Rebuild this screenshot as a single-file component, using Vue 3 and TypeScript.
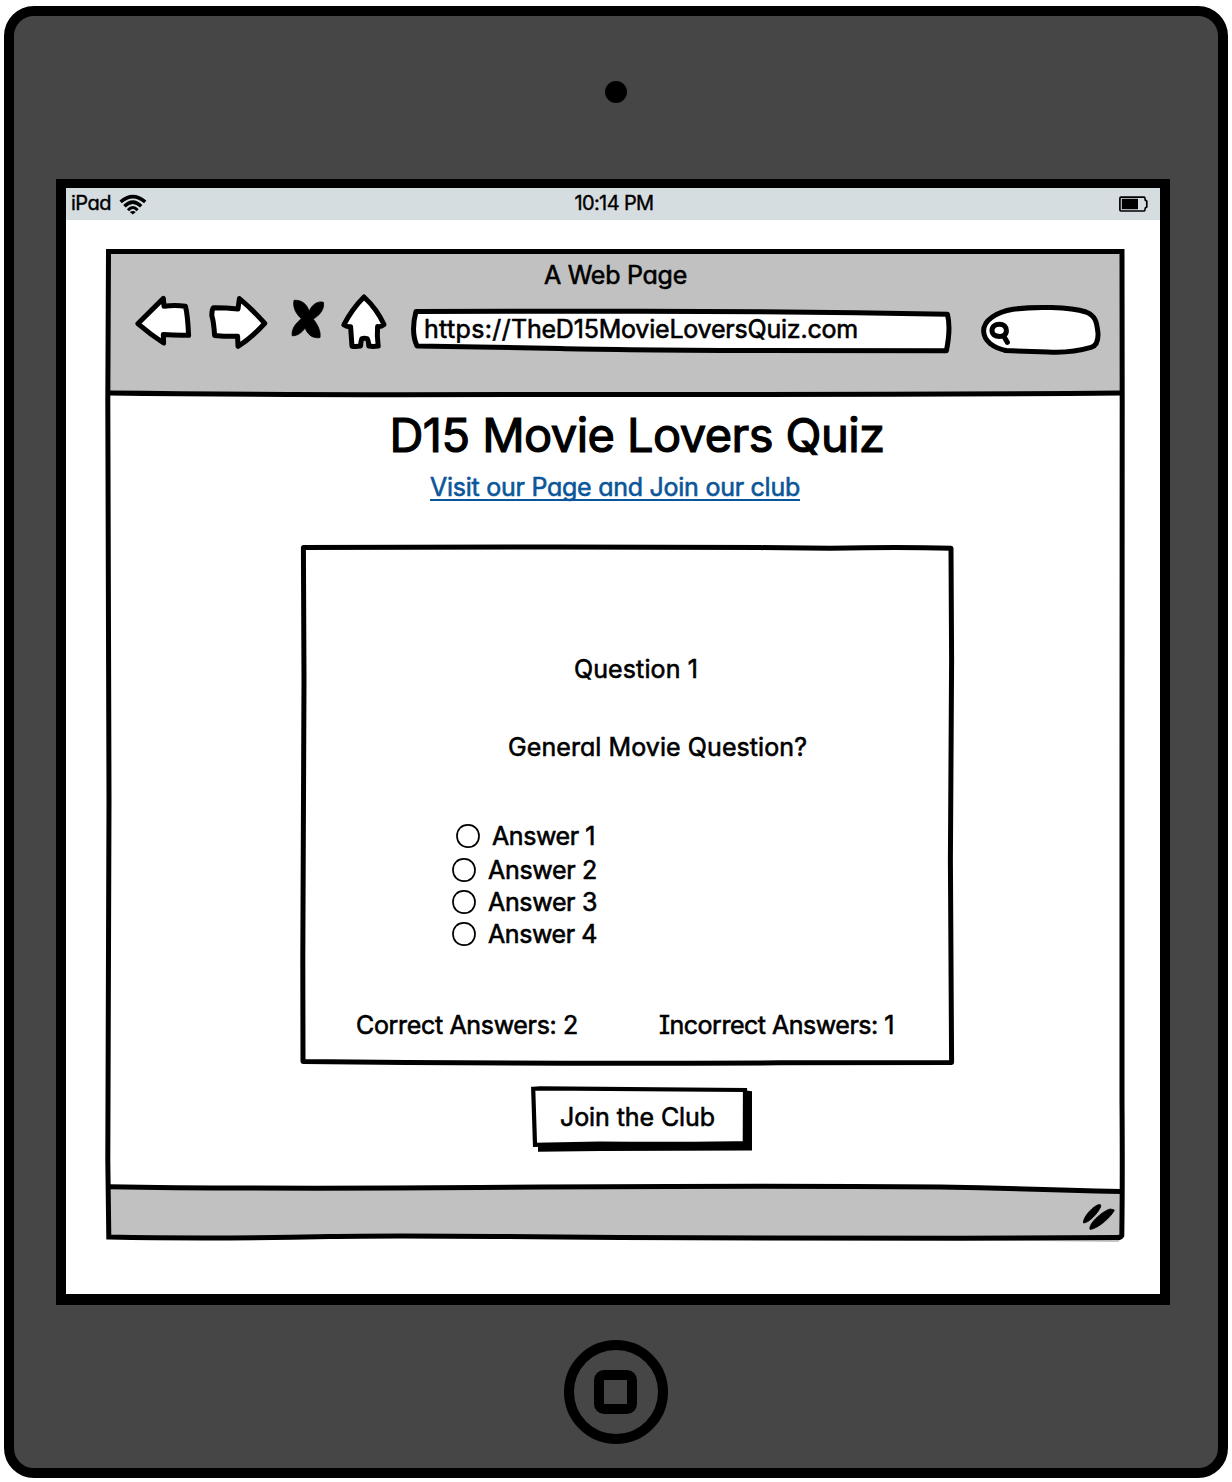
<script setup lang="ts">
import { ref } from 'vue'

interface Answer {
  label: string
  width: number
}

const answers: Answer[] = [
  { label: 'Answer 1', width: 103 },
  { label: 'Answer 2', width: 109 },
  { label: 'Answer 3', width: 109 },
  { label: 'Answer 4', width: 109 },
]
const picked = ref<string>('')

// Spaces a label's letters so that it takes up the given width in pixels.
const vFit = {
  mounted(el: HTMLElement, binding: { value: number }) {
    const count = (el.textContent ?? '').length
    const natural = el.getBoundingClientRect().width
    el.style.letterSpacing = `${(binding.value - natural) / count}px`
  },
}
</script>

<template>
  <div class="device">
    <div class="camera"></div>

    <main class="screen">
      <div class="status">
        <div class="carrier">
          <span v-fit="40">iPad</span>
          <svg class="wifi" width="28" height="22" viewBox="119 192 28 22">
            <g fill="none" stroke="#000" stroke-width="3.5">
              <path d="M120.6 200.8Q132.8 190.4 145.2 200.8" />
              <path d="M124.4 205.2Q132.8 197 141.2 205.2" />
              <path d="M128 209.2Q132.8 203.6 137.6 209.2" stroke-width="3" />
            </g>
            <path d="M129.8 211Q132.8 209 135.8 211L132.8 213.6Z" />
          </svg>
        </div>
        <span v-fit="79" class="clock">10:14 PM</span>
        <svg class="battery" width="31" height="18" viewBox="1118 195 31 18">
          <path
            d="M1121 197.1H1144.2Q1145 197.2 1145.2 200L1146.8 201.2V206.8L1145.2 208.2Q1145 210.8 1144.2 211H1121Q1119.9 211 1119.9 209.8V198.4Q1119.9 197.1 1121 197.1Z"
            fill="none"
            stroke="#000"
            stroke-width="1.7"
          />
          <rect x="1121.8" y="198.8" width="16.2" height="10.4" />
        </svg>
      </div>

      <section class="window">
        <svg class="frame" viewBox="104 247 1023 997" width="1023" height="997">
          <path d="M108 251H1122V393L600 395L108 393Z" fill="#c1c1c1" />
          <path d="M108 1187L300 1188L900 1187L1122 1192L1122 1238L1118 1242L960 1240L108 1237Z" fill="#c1c1c1" />
          <g fill="none" stroke="#000" stroke-width="5">
            <path d="M108.5 251.5H1122L1122.2 400L1122 800L1122 1100Q1122.6 1180 1121.8 1235.5Q1121 1237.6 1117 1237.6L960 1238.3L620 1237.6Q400 1235 330 1236.5Q210 1239 108.8 1237L107.8 1160L109 800L107.8 400Z" />
            <path d="M109 393Q240 394.5 400 394.7L600 394.5Q860 395 1121 393" />
            <path d="M109 1186.7Q240 1189 480 1187.6Q740 1185.4 940 1187Q1040 1189 1121 1191.6" />
          </g>
        </svg>

        <header class="chrome">
          <div v-fit="143" class="page-title">A Web Page</div>
          <div class="toolbar">
            <svg width="60" height="60" viewBox="134 294 60 60" class="tool">
              <path d="M137.8 323.7L163.4 298.4L164 306.2Q175 305 185.4 306.2Q187.6 314 188.6 335.3Q176 335.6 163.3 334.6L163.6 343Q151 335 137.8 323.7Z" />
            </svg>
            <svg width="62" height="60" viewBox="208 294 62 60" class="tool forward">
              <path d="M213.4 307.7Q225 307.6 238 309L239.4 298.6Q252 309 264.8 323.3Q251 338.5 238 346.3L237.6 336.3Q226 336.6 214.6 335.4Q213.8 322 211.9 316Q211.6 310 213.4 307.7Z" />
            </svg>
            <svg width="36" height="60" viewBox="290 294 36 60" class="cross">
              <path d="M294 300.3C301.6 299.6 307.5 304.6 309 311.4C312 304.6 317.6 300.6 323.4 302.3C324.8 309 319.6 315.6 313.2 319C317.8 324.6 321 331.6 320 337.6C311.4 338.9 306.8 333 305.2 328C301.8 332.4 298 335.8 292.2 335.8C291.2 328.6 296.4 322.6 301.4 318.8C295.6 313.6 292.6 307 294 300.3Z" stroke="#000" stroke-width="0.8" />
            </svg>
            <svg width="50" height="60" viewBox="340 292 50 60" class="tool house">
              <path d="M364 297Q377 309 384 324.6Q381 327 377.6 326.6Q376.8 336 378.2 346Q373 346.8 368.8 346Q368.4 340 367 338.6Q364 337.8 361.8 338.8Q360.8 341 360.6 346Q356 346.8 352 346.2L350.6 326.7Q347 327.4 343.8 324.9Q352 309 364 297Z" />
            </svg>
            <div class="address">
              <svg class="backing tool" width="544" height="52" viewBox="410 306 544 52">
                <path d="M416 311.4L640 311.2Q800 311.5 947.4 314.2Q951 328 946.4 350.8L760 350.6Q600 349.6 560 348.4L417 346Q410.6 332 416 311.4Z" />
              </svg>
              <span v-fit="87">https://</span><span v-fit="347">TheD15MovieLoversQuiz.com</span>
            </div>
            <svg width="122" height="54" viewBox="980 304 122 54" class="tool search">
              <path d="M1007 350.6C993 348 984 341 983.6 331C983.6 320 997 312 1013 309.3C1034 306.2 1070 306.8 1086 312C1097 316 1096.8 325 1098 333C1098.4 342 1096 346 1091 347.4C1080 350.6 1066 353 1048 352L1005 350.6" />
              <path d="M1003.6 336L1007.4 342.4" />
              <path d="M999.4 324.2C1003.6 324.2 1006.4 326.6 1006.4 330.8C1006.4 334.6 1003.6 336.4 999.6 336.4C995 336.4 992 334.4 992 330.6C992 326.6 995 324.2 999.4 324.2Z" />
            </svg>
          </div>
        </header>

        <article class="page">
          <h1><span v-fit="495">D15 Movie Lovers Quiz</span></h1>
          <a class="club-link"><span v-fit="370">Visit our Page and Join our club</span></a>

          <section class="quiz">
            <svg class="backing tool" width="658" height="526" viewBox="298 542 658 526">
              <path d="M303.4 547.6Q420 547 560 547L760 547.6L830 548.2Q900 546.8 951 548.2L951.6 660L950.4 860L951.6 1062.6L780 1062.8Q540 1064.2 303 1061.4L302.8 960Q303.4 760 304 680Z" />
            </svg>
            <div v-fit="124" class="number">Question 1</div>
            <div v-fit="299" class="question">General Movie Question?</div>
            <div class="answers">
              <label v-for="answer in answers" :key="answer.label" class="answer" @click="picked = answer.label">
                <svg width="24" height="24" viewBox="0 0 24 24">
                  <path
                    d="M12 .9C18.5 .9 23 5.6 23 12C23 18.6 18.4 23.1 12 23.1C5.4 23.1 1 18.4 1 12C1 5.4 5.4 .9 12 .9Z"
                    fill="#fff"
                    stroke="#000"
                    stroke-width="1.7"
                  />
                  <circle v-if="picked === answer.label" cx="12" cy="12" r="6" />
                </svg>
                <span v-fit="answer.width">{{ answer.label }}</span>
              </label>
            </div>
            <div class="score">
              <span v-fit="222">Correct Answers: 2</span>
              <span v-fit="235">Incorrect Answers: 1</span>
            </div>
          </section>

          <button type="button" class="join">
            <svg class="backing" width="224" height="70" viewBox="530 1084 224 70">
              <path d="M538 1142V1151.8L600 1151L752 1150.6V1091.2L746 1090.6Z" />
              <path d="M533.2 1088.8L540 1088.4L745 1090L744.8 1143Q690 1144.2 600 1143.6L535 1144.8Z" fill="#fff" stroke="#000" stroke-width="4.2" />
            </svg>
            <span v-fit="155">Join the Club</span>
          </button>
        </article>

        <footer class="footer">
          <svg width="36" height="30" viewBox="1081 1202 36 30">
            <g stroke="#000" stroke-width="0.8">
              <path d="M1083.4 1223C1082.6 1217 1094 1205 1099.4 1204.4Q1101.6 1204.6 1100.6 1207C1098 1213 1089 1223 1083.4 1223Z" />
              <path d="M1090 1229.4C1088 1223 1105 1209.4 1110.6 1209L1114.4 1210C1112 1216 1098 1229 1090 1229.4Z" />
            </g>
          </svg>
        </footer>
      </section>
    </main>

    <div class="home-button"><div class="home-square"></div></div>
  </div>
</template>

<style>
body {
  margin: 0;
  background: #fff;
}
</style>

<style scoped>
.device {
  box-sizing: border-box;
  width: 1224px;
  height: 1472px;
  margin: 6px 4px 4px;
  border: 10px solid #000;
  border-radius: 30px;
  background: #464646;
  display: flex;
  flex-direction: column;
  align-items: center;
  overflow: hidden;
  font-family: Inter, 'Noto Sans', sans-serif;
  font-size: 25px;
  line-height: 32px;
  font-feature-settings: 'cv11', 'cv08', 'calt' 0;
  -webkit-text-stroke: 0.6px currentColor;
  color: #000;
  white-space: nowrap;
}
svg {
  display: block;
  flex: none;
}
.camera {
  flex: none;
  width: 22px;
  height: 22px;
  margin-top: 65px;
  border-radius: 50%;
  background: #000;
}
.screen {
  flex: none;
  box-sizing: border-box;
  width: 1114px;
  height: 1126px;
  margin: 76px 6px 0 0;
  border: solid #000;
  border-width: 9px 10px 11px;
  background: #fff;
  display: flex;
  flex-direction: column;
}
.status {
  height: 32px;
  background: #d6dde0;
  display: grid;
  grid-template-columns: 1fr auto 1fr;
  align-items: center;
  font-size: 20px;
  padding: 0 11px 0 5px;
  line-height: 30px;
  -webkit-text-stroke-width: 0.4px;
}
.status span {
  margin-top: -2px;
}
.carrier {
  display: flex;
  align-items: center;
  gap: 8px;
}
.clock {
  margin-left: 8px;
}
.battery {
  justify-self: end;
}
.window {
  position: relative;
  width: 1019px;
  height: 992px;
  margin: 29px 0 0 40px;
  display: flex;
  flex-direction: column;
}
.frame {
  position: absolute;
  left: -2px;
  top: -2px;
}
.backing {
  position: absolute;
  left: -2px;
  top: -2px;
}
.tool {
  fill: #fff;
  stroke: #000;
  stroke-width: 5px;
  stroke-linejoin: round;
  stroke-linecap: round;
}
.chrome {
  position: relative;
  height: 144px;
  display: flex;
  flex-direction: column;
  align-items: center;
  padding-top: 10px;
  box-sizing: border-box;
}
.toolbar {
  align-self: stretch;
  display: flex;
  align-items: flex-start;
  padding-left: 28px;
  margin-top: 3px;
}
.forward {
  margin-left: 14px;
}
.cross {
  margin-left: 20px;
}
.house {
  margin: -2px 0 0 14px;
}
.address {
  position: relative;
  box-sizing: border-box;
  width: 540px;
  height: 48px;
  margin: 14px 0 0 22px;
  padding: 5px 0 0 12px;
}
.address span {
  position: relative;
  display: inline-block;
}
.search {
  margin: 10px 0 0 28px;
}
.page {
  position: relative;
  display: flex;
  flex-direction: column;
  align-items: center;
}
h1 {
  margin: 14px 0 0 43px;
  font-size: 47px;
  line-height: 56px;
  font-weight: 400;
  -webkit-text-stroke-width: 1.2px;
}
.club-link {
  height: 28px;
  margin-top: 8px;
  margin-right: 1px;
  border-bottom: 2px solid #0b5699;
  color: #0b5699;
}
.quiz {
  position: relative;
  box-sizing: border-box;
  width: 654px;
  height: 522px;
  margin: 43px 0 0 23px;
  padding-top: 109px;
  display: flex;
  flex-direction: column;
  align-items: flex-start;
}
.number {
  position: relative;
  margin-left: 274px;
}
.question {
  position: relative;
  margin: 46px 0 0 208px;
}
.answers {
  position: relative;
  margin: 57px 0 0 152px;
  display: flex;
  flex-direction: column;
}
.answer {
  display: flex;
  align-items: center;
  gap: 12px;
}
.answer:first-child {
  margin: 0 0 2px 4px;
}
.score {
  position: relative;
  margin: 59px 0 0 56px;
  display: flex;
  gap: 81px;
}
.join {
  position: relative;
  box-sizing: border-box;
  width: 220px;
  height: 66px;
  margin: 20px 0 0 53px;
  padding: 15px 0 19px 28px;
  border: 0;
  background: none;
  color: inherit;
  font: inherit;
  font-feature-settings: inherit;
  text-align: left;
}
.join span {
  position: relative;
  display: inline-block;
}
.footer {
  position: relative;
  margin-top: auto;
  display: flex;
  justify-content: flex-end;
  padding: 0 8px 9px 0;
}
.home-button {
  flex: none;
  box-sizing: border-box;
  width: 104px;
  height: 104px;
  margin-top: 35px;
  border: 10px solid #000;
  border-radius: 50%;
  display: flex;
  align-items: center;
  justify-content: center;
}
.home-square {
  width: 23px;
  height: 24px;
  margin-right: 1px;
  border: 10px solid #000;
  border-radius: 10px;
}
</style>
